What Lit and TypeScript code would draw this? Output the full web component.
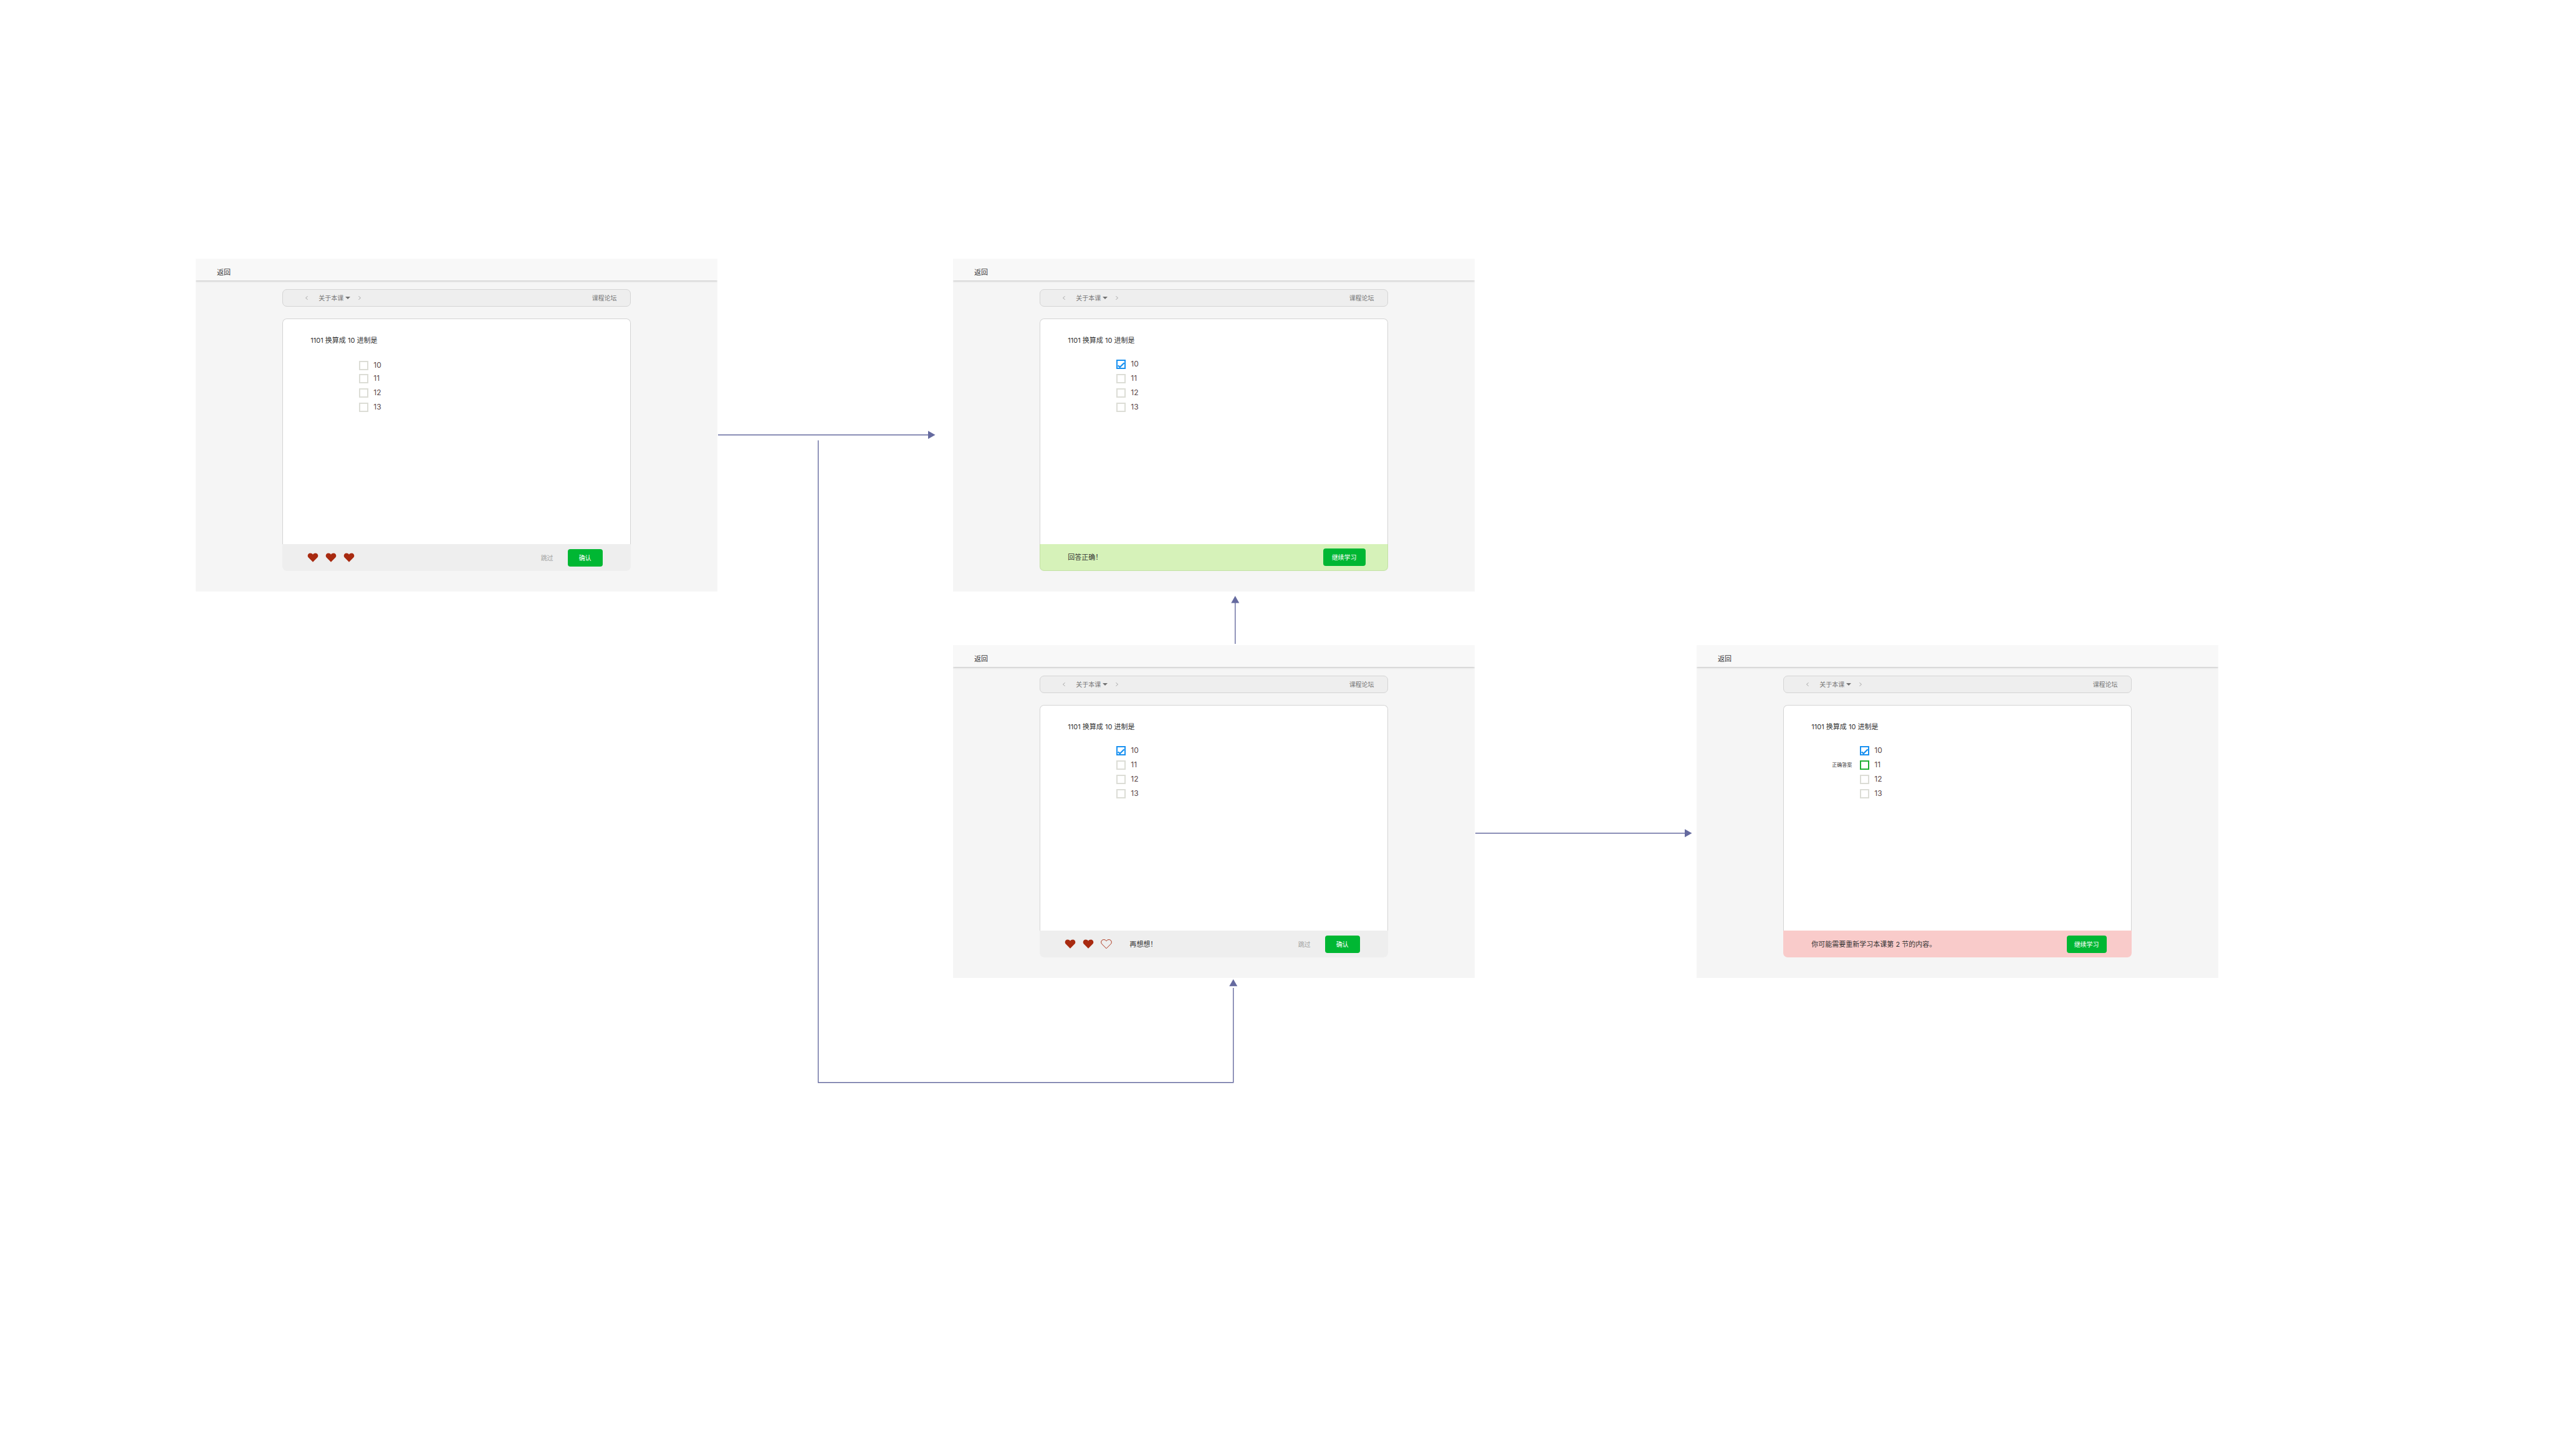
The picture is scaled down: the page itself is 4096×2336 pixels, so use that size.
import { LitElement, html, css, svg, nothing } from "lit";
import { customElement, property } from "lit/decorators.js";
import { classMap } from "lit/directives/class-map.js";

type Mark = "none" | "answer";
type Tone = "plain" | "success" | "error";

interface Option {
  label: string;
  checked?: boolean;
  mark?: Mark;
}

interface Screen {
  id: string;
  x: number;
  y: number;
  tight?: boolean;
  options: Option[];
  tone: Tone;
  hearts?: boolean[];
  message?: string;
  skip?: boolean;
  action: string;
}

const PICKED: Option[] = [{ label: "10", checked: true }, { label: "11" }, { label: "12" }, { label: "13" }];

const SCREENS: Screen[] = [
  {
    id: "start",
    x: 314,
    y: 415,
    tight: true,
    options: [{ label: "10" }, { label: "11" }, { label: "12" }, { label: "13" }],
    tone: "plain",
    hearts: [true, true, true],
    skip: true,
    action: "确认",
  },
  { id: "right", x: 1529, y: 415, options: PICKED, tone: "success", message: "回答正确！", action: "继续学习" },
  {
    id: "retry",
    x: 1529,
    y: 1035,
    options: PICKED,
    tone: "plain",
    hearts: [true, true, false],
    message: "再想想！",
    skip: true,
    action: "确认",
  },
  {
    id: "wrong",
    x: 2722,
    y: 1035,
    options: [{ label: "10", checked: true }, { label: "11", mark: "answer" }, { label: "12" }, { label: "13" }],
    tone: "error",
    message: "你可能需要重新学习本课第 2 节的内容。",
    action: "继续学习",
  },
];

const heart = (full: boolean) => html`<svg class="heart" viewBox="0 0 26 22" aria-hidden="true">
  <path
    d="M13 21.6 2.5 11.1A6.1 6.1 0 0 1 .8 6.8C.8 3.4 3.4.8 6.8.8 9.6.8 11.9 2 13 4.2 14.1 2 16.4.8 19.2.8 22.6.8 25.2 3.4 25.2 6.8a6.1 6.1 0 0 1-1.7 4.3z"
    fill=${full ? "#a82a10" : "none"}
    stroke=${full ? "none" : "#a82a10"}
    stroke-width="1.4"
  />
</svg>`;

@customElement("quiz-screen")
export class QuizScreen extends LitElement {
  @property({ attribute: false }) screen!: Screen;

  static styles = css`
    :host {
      display: block;
      background: #f5f5f5;
      color: #333;
      font-family: Inter, "Noto Sans CJK SC", sans-serif;
      font-size: 11px;
      line-height: 16px;
      padding-bottom: 33px;
    }
    button,
    input {
      font: inherit;
      margin: 0;
    }
    button {
      border: 0;
      padding: 0;
      background: none;
      color: inherit;
    }
    a {
      color: inherit;
      text-decoration: none;
    }
    .top {
      display: flex;
      align-items: center;
      height: 35px;
      padding: 8px 34px 0;
      box-sizing: border-box;
      background: #f8f8f8;
      box-shadow: 0 1px 3px rgba(0, 0, 0, 0.22);
      clip-path: inset(0 0 -6px 0);
    }
    .body {
      width: 66.7%;
      margin: 14px auto 0;
    }
    .nav {
      display: flex;
      align-items: center;
      height: 28px;
      box-sizing: border-box;
      padding: 0 21px 0 36px;
      border: 1px solid #d4d4d4;
      border-radius: 7px;
      background: #eee;
      color: #777;
      font-size: 10px;
    }
    .nav .step {
      display: flex;
    }
    .nav .lesson {
      display: flex;
      align-items: center;
      gap: 3px;
      margin: 0 13px 0 17px;
    }
    .nav .forum {
      margin-left: auto;
    }
    .chevron {
      display: block;
      width: 4px;
      height: 6px;
    }
    .caret {
      display: block;
      width: 8px;
      height: 4px;
    }
    .card {
      display: flex;
      flex-direction: column;
      margin-top: 19px;
      border-radius: 7px;
      background: #fff;
    }
    .question {
      min-height: 362px;
      box-sizing: border-box;
      padding: 26px 44px 0;
      border: 1px solid #d4d4d4;
      border-bottom: 0;
      border-radius: 7px 7px 0 0;
    }
    .title {
      margin: 0;
      font: inherit;
    }
    .options {
      display: grid;
      gap: 8px;
      margin: 22px 0 0;
      padding: 0;
      list-style: none;
    }
    .options.tight {
      margin-top: 24px;
    }
    .options.tight .option:first-child {
      margin-bottom: -2px;
    }
    .option {
      display: grid;
      grid-template-columns: 65px 15px auto;
      justify-content: start;
      align-items: center;
      column-gap: 13px;
      height: 15px;
    }
    .note {
      text-align: right;
      font-size: 8px;
    }
    .box {
      grid-column: 2;
      appearance: none;
      display: grid;
      width: 15px;
      height: 15px;
      border: 2px solid #dcddd6;
      background: #fff;
    }
    .box.checked {
      border-color: #1890f0;
    }
    .box.answer {
      border-color: #1faf33;
    }
    .tick {
      grid-column: 2;
      width: 15px;
      height: 15px;
      pointer-events: none;
    }
    .box,
    .tick,
    .note,
    .text {
      grid-row: 1;
    }
    .text {
      grid-column: 3;
      margin-left: -5px;
      font-size: 12px;
      color: #5b4747;
    }
    .foot {
      display: flex;
      align-items: center;
      height: 43px;
      box-sizing: border-box;
      padding: 0 45px;
      border-radius: 0 0 7px 7px;
      background: #eee;
    }
    .foot.success {
      padding-right: 35px;
      padding-left: 44px;
      border: 1px solid #c3e0a5;
      border-top: 0;
      background: #d6f2b9;
    }
    .foot.error {
      padding-right: 40px;
      background: #f9cbca;
    }
    .hearts {
      display: flex;
      gap: 11px;
      margin: 0 28px 0 -5px;
    }
    .heart {
      display: block;
      width: 18px;
      height: 15px;
    }
    .actions {
      display: flex;
      gap: 23px;
      margin-left: auto;
      font-size: 10px;
    }
    .skip {
      color: #a0a0a0;
    }
    .go {
      height: 28px;
      padding: 0 18px;
      border-radius: 4px;
      background: #00b733;
      color: #fff;
    }
    .foot.success .go {
      padding: 0 14px;
    }
    .foot.error .go {
      padding: 0 12px;
    }
  `;

  render() {
    const s = this.screen;
    return html`
      <header class="top"><a class="back" href="#back">返回</a></header>
      <div class="body">
        <nav class="nav">
          <button class="step" type="button" aria-label="上一课">
            <svg class="chevron" viewBox="0 0 4 6"><path d="M3.7.2.5 3l3.2 2.8" fill="none" stroke="#8a8a8a" stroke-width=".7" /></svg>
          </button>
          <button class="lesson" type="button">
            关于本课
            <svg class="caret" viewBox="0 0 8 4"><path d="M0 0h8L4 4z" fill="#707070" /></svg>
          </button>
          <button class="step" type="button" aria-label="下一课">
            <svg class="chevron" viewBox="0 0 4 6"><path d="M.3.2 3.5 3 .3 5.8" fill="none" stroke="#8a8a8a" stroke-width=".7" /></svg>
          </button>
          <a class="forum" href="#forum">课程论坛</a>
        </nav>
        <section class="card">
          <div class="question">
            <h2 class="title">1101 换算成 10 进制是</h2>
            <ul class=${classMap({ options: true, tight: !!s.tight })}>
              ${s.options.map((o, i) => this.option(o, `${s.id}-${i}`))}
            </ul>
          </div>
          <footer class=${classMap({ foot: true, [s.tone]: true })}>
            ${s.hearts ? html`<div class="hearts">${s.hearts.map(heart)}</div>` : nothing}
            ${s.message ? html`<span class="message">${s.message}</span>` : nothing}
            <div class="actions">
              ${s.skip ? html`<button class="skip" type="button">跳过</button>` : nothing}
              <button class="go" type="button">${s.action}</button>
            </div>
          </footer>
        </section>
      </div>
    `;
  }

  private option(o: Option, id: string) {
    const answer = o.mark === "answer";
    return html`<li class="option">
      ${answer ? html`<span class="note">正确答案</span>` : nothing}
      <input class=${classMap({ box: true, checked: !!o.checked, answer })} type="checkbox" id=${id} .checked=${!!o.checked} />
      ${o.checked
        ? html`<svg class="tick" viewBox="0 0 15 15" aria-hidden="true">
            <path d="M2.7 9.3 5.8 12 12.6 5.2" fill="none" stroke="#1890f0" stroke-width="2.3" />
          </svg>`
        : nothing}
      <label class="text" for=${id}>${o.label}</label>
    </li>`;
  }
}

interface Link {
  line: string;
  head: string;
}

const LINKS: Link[] = [
  { line: "M1152 697.7H1490", head: "M1489 691.2V704.2L1500.5 697.7z" },
  { line: "M1312.7 706.5V1736.7H1978.7V1585", head: "M1972.2 1582.2H1985.2L1978.7 1571z" },
  { line: "M1981.7 1033V967", head: "M1975.2 967.5H1988.2L1981.7 956z" },
  { line: "M2367 1336.7H2704", head: "M2703 1330.2V1343.2L2714.5 1336.7z" },
];

@customElement("app-root")
export class AppRoot extends LitElement {
  static styles = css`
    :host {
      display: block;
      position: relative;
      min-height: 100vh;
      background: #fff;
    }
    .links {
      position: absolute;
      inset: 0;
      width: 100%;
      height: 100%;
    }
    .screen {
      position: absolute;
      width: 837px;
    }
  `;

  render() {
    return html`
      <svg class="links" aria-hidden="true">
        ${LINKS.map(
          (l) => svg`<path d=${l.line} fill="none" stroke="#656a9f" stroke-width="1.4" /><path d=${l.head} fill="#656a9f" />`,
        )}
      </svg>
      ${SCREENS.map(
        (s) => html`<quiz-screen class="screen" style="left:${s.x}px;top:${s.y}px" .screen=${s}></quiz-screen>`,
      )}
    `;
  }
}
